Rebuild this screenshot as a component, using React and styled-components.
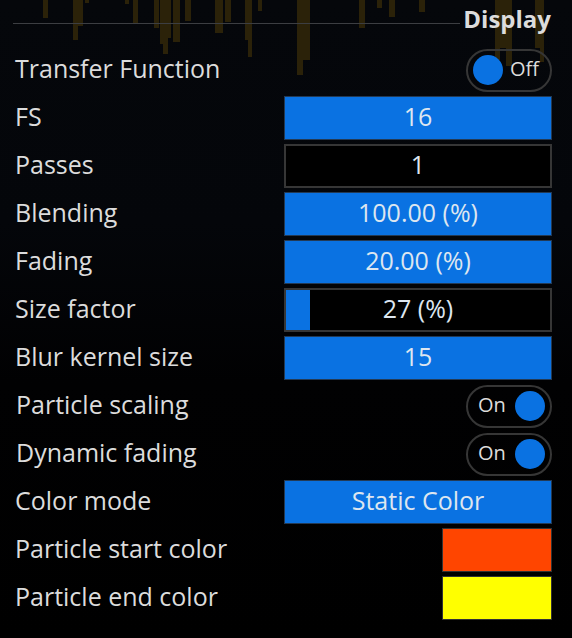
import React from "react";
import styled, { createGlobalStyle } from "styled-components";

const GlobalStyle = createGlobalStyle`
  html, body {
    margin: 0;
    padding: 0;
    background: #000;
  }
  body {
    font-family: "Open Sans", "Noto Sans", sans-serif;
  }
`;

const drips = [
  [43, 5, 18], [73, 5, 40], [78, 5, 26], [85, 4, 3], [125, 4, 4], [133, 5, 24],
  [154, 5, 28], [160, 4, 44], [163, 5, 54], [168, 3, 38], [173, 7, 42], [185, 6, 21],
  [215, 8, 33], [225, 6, 22], [245, 4, 40], [248, 4, 57], [258, 4, 11],
  [297, 6, 75], [303, 7, 60], [359, 6, 28], [377, 5, 8], [389, 6, 17],
  [419, 6, 12], [495, 5, 60], [500, 6, 48], [506, 6, 66], [535, 5, 48], [540, 4, 62],
];

const rows = [
  { label: "Transfer Function", kind: "toggle", on: false },
  { label: "FS", kind: "value", value: "16", fill: 100 },
  { label: "Passes", kind: "value", value: "1", fill: 0 },
  { label: "Blending", kind: "value", value: "100.00 (%)", fill: 100 },
  { label: "Fading", kind: "value", value: "20.00 (%)", fill: 100 },
  { label: "Size factor", kind: "value", value: "27 (%)", fill: 9 },
  { label: "Blur kernel size", kind: "value", value: "15", fill: 100 },
  { label: "Particle scaling", kind: "toggle", on: true, indent: true },
  { label: "Dynamic fading", kind: "toggle", on: true, indent: true },
  { label: "Color mode", kind: "value", value: "Static Color", fill: 100 },
  { label: "Particle start color", kind: "color", color: "#ff4500" },
  { label: "Particle end color", kind: "color", color: "#ffff00" },
];

function Control({ row }) {
  if (row.kind === "toggle") {
    return (
      <Toggle on={row.on}>
        <Knob />
        <ToggleText>{row.on ? "On" : "Off"}</ToggleText>
      </Toggle>
    );
  }
  if (row.kind === "color") {
    return <Swatch style={{ background: row.color }} />;
  }
  return (
    <ValueBox filled={row.fill === 100}>
      {row.fill > 0 && row.fill < 100 && <Fill style={{ width: `${row.fill}%` }} />}
      <ValueText>{row.value}</ValueText>
    </ValueBox>
  );
}

export default function App() {
  return (
    <Panel>
      <GlobalStyle />
      <Backdrop width="572" height="90" viewBox="0 0 572 90">
        {drips.map(([x, w, h], i) => (
          <rect key={i} x={x} y={0} width={w} height={h} fill="#2b2209" />
        ))}
      </Backdrop>
      <Header>
        <Rule />
        <Title>Display</Title>
      </Header>
      <List>
        {rows.map((row) => (
          <Row key={row.label}>
            <Label indent={row.indent}>{row.label}</Label>
            <Control row={row} />
          </Row>
        ))}
      </List>
    </Panel>
  );
}

const Panel = styled.div`
  position: relative;
  width: 572px;
  height: 638px;
  overflow: hidden;
  background: linear-gradient(180deg, #05070b 0%, #04060a 35%, #010102 60%, #000 100%);
`;

const Backdrop = styled.svg`
  position: absolute;
  top: 0;
  left: 0;
  pointer-events: none;
`;

const Header = styled.div`
  position: relative;
  display: flex;
  align-items: center;
  height: 44px;
  padding: 0 21px 0 13px;
`;

const Rule = styled.div`
  flex: 1;
  height: 1px;
  margin-top: 2px;
  background: #3c3e42;
`;

const Title = styled.div`
  font-size: 24px;
  line-height: 1;
  font-weight: 700;
  color: #dcdcdc;
  margin-top: -6px;
  margin-left: 3px;
`;

const List = styled.div`
  position: relative;
  display: flex;
  flex-direction: column;
  gap: 4px;
  margin-top: 4px;
  padding: 0 20px 0 15px;
`;

const Row = styled.div`
  display: grid;
  grid-template-columns: 1fr 268px;
  align-items: center;
  height: 44px;
`;

const Label = styled.div`
  font-size: 25px;
  line-height: 1;
  margin-top: -4px;
  color: #dcdcdc;
  padding-left: ${(p) => (p.indent ? "1px" : "0")};
  white-space: nowrap;
`;

const ValueBox = styled.div`
  position: relative;
  height: 44px;
  box-sizing: border-box;
  display: flex;
  align-items: center;
  justify-content: center;
  overflow: hidden;
  background: ${(p) => (p.filled ? "#0a72e2" : "#000")};
  border: ${(p) => (p.filled ? "1px solid #233a55" : "2px solid #363636")};
`;

const Fill = styled.div`
  position: absolute;
  left: 0;
  top: 0;
  bottom: 0;
  background: #0a72e2;
`;

const ValueText = styled.span`
  position: relative;
  font-size: 25px;
  line-height: 1;
  margin-top: -3px;
  color: #dde6f0;
`;

const Toggle = styled.div`
  justify-self: end;
  width: 86px;
  height: 43px;
  box-sizing: border-box;
  border: 2px solid #363636;
  border-radius: 22px;
  display: flex;
  align-items: center;
  flex-direction: ${(p) => (p.on ? "row-reverse" : "row")};
  justify-content: space-between;
  padding: ${(p) => (p.on ? "0 5px 0 10px" : "0 11px 0 5px")};
`;

const Knob = styled.div`
  width: 30px;
  height: 30px;
  border-radius: 50%;
  background: #0a72e2;
`;

const ToggleText = styled.span`
  font-size: 20px;
  line-height: 1;
  margin-top: -2px;
  color: #dcdcdc;
`;

const Swatch = styled.div`
  justify-self: end;
  width: 110px;
  height: 44px;
  box-sizing: border-box;
  border: 1px solid #333;
`;
